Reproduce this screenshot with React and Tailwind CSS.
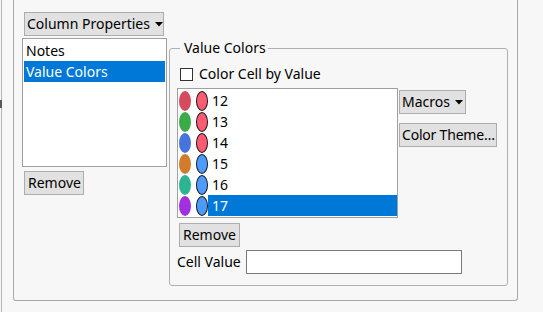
import React from 'react';

const rows = [
  { v: '12', a: '#d44b5b', b: '#ff5b72' },
  { v: '13', a: '#3aab48', b: '#ff5b72' },
  { v: '14', a: '#4673de', b: '#ff5b72' },
  { v: '15', a: '#d17b2b', b: '#4d9bff' },
  { v: '16', a: '#2cb592', b: '#4d9bff' },
  { v: '17', a: '#a22fe0', b: '#4d9bff', selected: true },
];

const Caret = () => (
  <svg width="8" height="5" viewBox="0 0 8 5" className="ml-[5px] mt-[1px] shrink-0">
    <path d="M0 0 H8 L4 4.5 Z" fill="#000" />
  </svg>
);

const Button = ({ children, className = '' }) => (
  <div
    className={`flex items-center whitespace-nowrap overflow-hidden h-[24px] bg-[#e1e1e1] border border-[#adadad] text-[14px] leading-[18px] text-black ${className}`}
  >
    {children}
  </div>
);

const App = () => {
  return (
    <div className="w-[543px] h-[312px] bg-[#f7f7f7] flex overflow-hidden font-['Noto_Sans','Liberation_Sans',sans-serif] text-black">
      {/* splitter edge */}
      <div className="w-[13px] h-full flex">
        <div className="ml-[1px] w-[1px] h-full bg-[#b4b4b4] flex flex-col">
          <div className="mt-[100px] h-[8px] w-[2px] -ml-[1px] bg-[#5a5a5a]" />
        </div>
      </div>

      {/* outer panel */}
      <div className="w-[505px] h-[301px] border-l border-r border-b border-[#a8a8a8] rounded-b-[3px] flex pl-[8px] pt-[12px]">
        {/* left column */}
        <div className="flex flex-col w-[145px]">
          <Button className="ml-[2px] w-[140px] h-[23px] pl-[2px]">
            Column Properties
            <Caret />
          </Button>
          <div className="mt-[2px] h-[129px] bg-white border border-[#a0a0a0] pt-[1px] px-[1px]">
            <div className="h-[21px] flex items-center pl-[2px] text-[14px]">Notes</div>
            <div className="h-[21px] flex items-center pl-[2px] text-[14px] bg-[#0078d7] text-white">
              Value Colors
            </div>
          </div>
          <Button className="ml-[2px] mt-[4px] w-[60px] pl-[3px]">Remove</Button>
        </div>

        {/* Value Colors group */}
        <fieldset className="ml-[2px] mt-[27px] w-[339px] h-[247px] border border-[#b0b0b0] rounded-[3px] pl-[7px]">
          <legend className="ml-[3px] pl-[4px] pr-[2px] text-[14px] leading-[18px]">Value Colors</legend>

          <div className="flex items-center h-[18px] mt-[8px] ml-[3px]">
            <div className="w-[13px] h-[13px] bg-white border border-[#333333]" />
            <span className="ml-[6px] text-[14px] leading-[18px]">Color Cell by Value</span>
          </div>

          <div className="flex mt-[5px]">
            <div className="w-[221px] h-[130px] bg-white border border-[#a0a0a0] pt-[1px]">
              {rows.map((r) => (
                <div key={r.v} className="h-[21px] flex items-center">
                  <div className="ml-[1px] w-[12px] h-[20px] rounded-[50%]" style={{ backgroundColor: r.a }} />
                  <div
                    className="ml-[5px] w-[12px] h-[20px] rounded-[50%] border border-[#1a1a1a]"
                    style={{ backgroundColor: r.b }}
                  />
                  <div
                    className={`flex-1 h-full flex items-center pl-[4px] text-[14px] ${
                      r.selected ? 'bg-[#0078d7] text-white' : ''
                    }`}
                  >
                    {r.v}
                  </div>
                </div>
              ))}
            </div>
            <div className="flex flex-col items-start ml-[1px] mt-[2px]">
              <Button className="w-[67px] pl-[2px]">
                Macros
                <Caret />
              </Button>
              <Button className="mt-[9px] w-[98px] pl-[2px] tracking-[-0.2px]">Color Theme…</Button>
            </div>
          </div>

          <Button className="ml-[2px] mt-[5px] w-[61px] pl-[3px]">Remove</Button>

          <div className="flex items-center mt-[3px]">
            <span className="text-[14px] leading-[18px]">Cell Value</span>
            <div className="ml-[5px] w-[216px] h-[24px] bg-white border border-[#7a7a7a]" />
          </div>
        </fieldset>
      </div>
    </div>
  );
};

export default App;
